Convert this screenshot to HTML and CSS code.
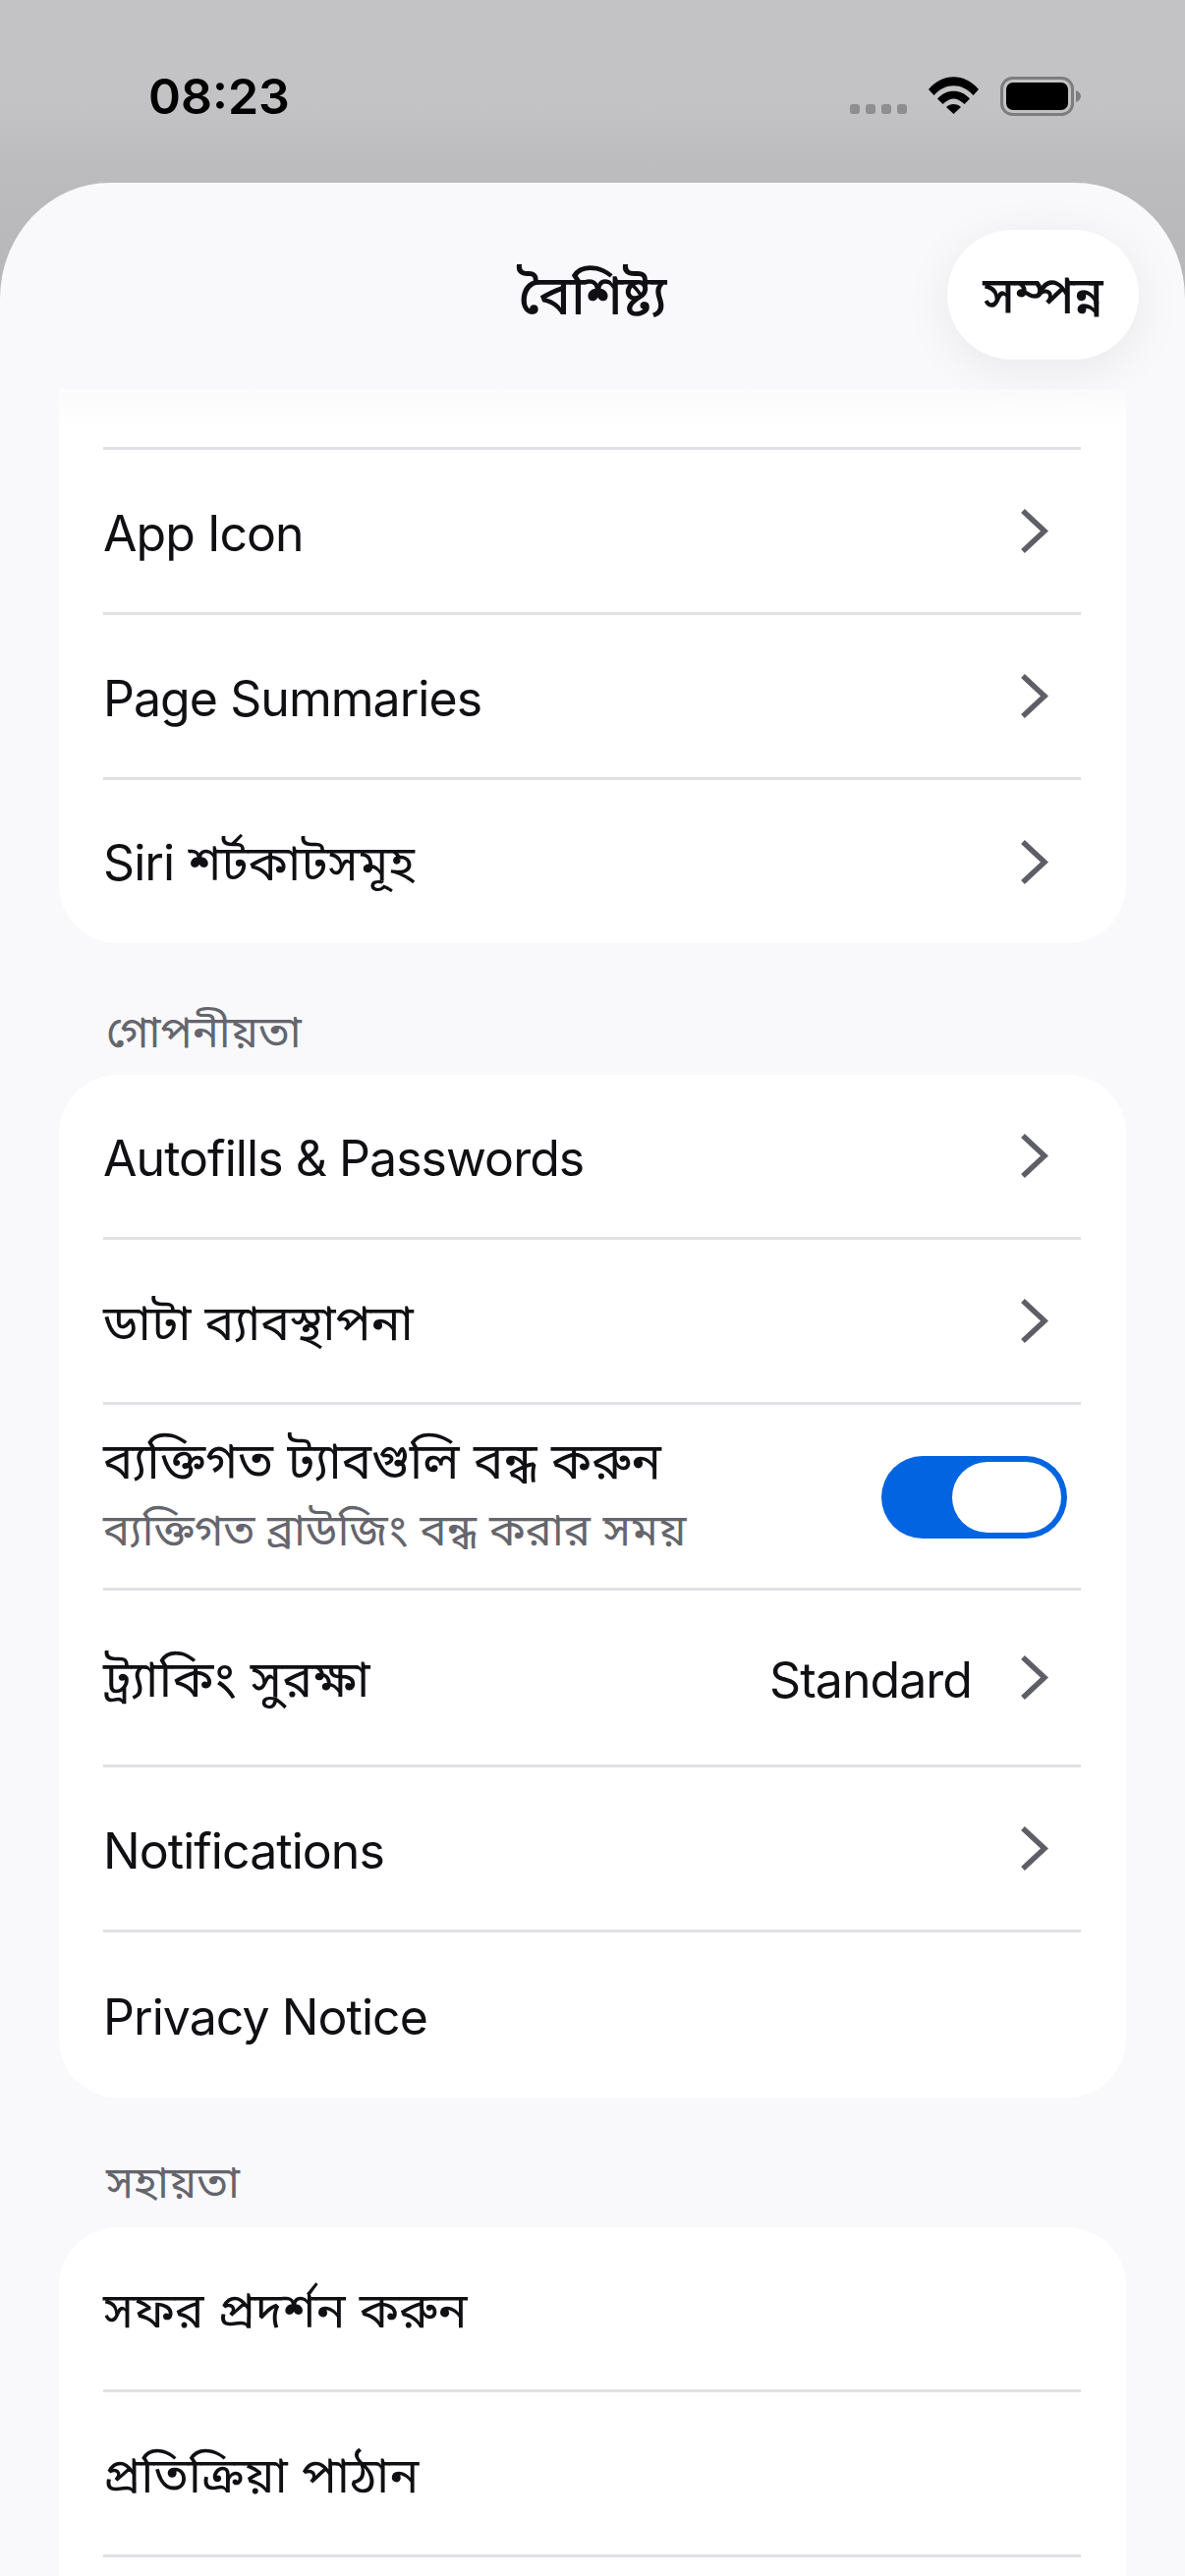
FILE: index.html
```html
<!DOCTYPE html>
<html lang="bn">
<head>
  <meta charset="UTF-8">
  <title>বৈশিষ্ট্য</title>
  <link rel="stylesheet" href="styles.css">
</head>
<body>
  <div class="status-bar">
    <span class="clock">08:23</span>
    <div class="status-icons">
      <div class="signal"><i></i><i></i><i></i><i></i></div>
      <svg class="wifi" width="51" height="38" viewBox="0 0 51 38">
        <path d="M0 13 C14 -4 37 -4 51 13 L45.500 19 C34 6 17 6 5.500 19 Z"/>
        <path d="M9 22.500 C18 12 33 12 42 22.500 L36.500 28 C29 20.500 22 20.500 14.500 28 Z"/>
        <path d="M18 31 C22 27 29 27 33 31 L25.500 38 Z"/>
      </svg>
      <svg class="battery" width="82" height="40" viewBox="0 0 82 40">
        <rect x="1.500" y="1.500" width="72" height="37" rx="11" fill="none" stroke="#7d7d7f" stroke-width="3"/>
        <rect x="6" y="6" width="63" height="28" rx="7"/>
        <path d="M77 14 C80 15 82 17.500 82 20 C82 22.500 80 25 77 26 Z" fill="#7d7d7f"/>
      </svg>
    </div>
  </div>

  <div class="sheet">
    <header class="sheet-header">
      <h1>বৈশিষ্ট্য</h1>
      <button class="done-btn">সম্পন্ন</button>
    </header>

    <div class="sheet-body">
      <section class="card card-cut">
        <div class="row row-stub"></div>
        <div class="row"><span class="latin">App Icon</span><svg class="chevron" viewBox="0 0 29 47"><path d="M3 3 L25 23.500 L3 44"/></svg></div>
        <div class="row"><span class="latin">Page Summaries</span><svg class="chevron" viewBox="0 0 29 47"><path d="M3 3 L25 23.500 L3 44"/></svg></div>
        <div class="row"><span class="bn"><span class="latin">Siri</span> শর্টকাটসমূহ</span><svg class="chevron" viewBox="0 0 29 47"><path d="M3 3 L25 23.500 L3 44"/></svg></div>
      </section>

      <h2 class="section-label">গোপনীয়তা</h2>
      <section class="card">
        <div class="row"><span class="latin">Autofills &amp; Passwords</span><svg class="chevron" viewBox="0 0 29 47"><path d="M3 3 L25 23.500 L3 44"/></svg></div>
        <div class="row"><span class="bn">ডাটা ব্যাবস্থাপনা</span><svg class="chevron" viewBox="0 0 29 47"><path d="M3 3 L25 23.500 L3 44"/></svg></div>
        <div class="row row-toggle">
          <div class="row-text">
            <span class="wide">ব্যক্তিগত ট্যাবগুলি বন্ধ করুন</span>
            <small>ব্যক্তিগত ব্রাউজিং বন্ধ করার সময়</small>
          </div>
          <div class="toggle"><div class="knob"></div></div>
        </div>
        <div class="row row-tall">
          <span class="bn wider">ট্র্যাকিং সুরক্ষা</span>
          <span class="row-value latin">Standard</span>
          <svg class="chevron" viewBox="0 0 29 47"><path d="M3 3 L25 23.500 L3 44"/></svg>
        </div>
        <div class="row"><span class="latin">Notifications</span><svg class="chevron" viewBox="0 0 29 47"><path d="M3 3 L25 23.500 L3 44"/></svg></div>
        <div class="row row-end"><span class="latin">Privacy Notice</span></div>
      </section>

      <h2 class="section-label section-label-short">সহায়তা</h2>
      <section class="card card-open">
        <div class="row"><span class="bn">সফর প্রদর্শন করুন</span></div>
        <div class="row"><span class="bn">প্রতিক্রিয়া পাঠান</span></div>
        <div class="row row-peek"></div>
      </section>
    </div>
  </div>
</body>
</html>
```

FILE: styles.css
```css
* {
  box-sizing: border-box;
}
html, body {
  margin: 0;
  height: 2622px;
  overflow: hidden;
}
body {
  width: 1206px;
  font-family: Inter, "Noto Sans Bengali", "Noto Sans", sans-serif;
  color: #101014;
  background: linear-gradient(#c3c3c5, #c3c3c5 100px, #bbbbbd 186px, #b4b4b6 400px);
  display: flex;
  flex-direction: column;
}
.status-bar {
  height: 186px;
  flex: none;
  display: flex;
  justify-content: space-between;
  padding: 68px 106px 0 151px;
}
.clock {
  font-size: 50px;
  line-height: 60px;
  font-weight: 600;
  color: #000;
}
.status-icons {
  display: flex;
  align-items: flex-start;
  gap: 22px;
  padding-top: 10px;
}
.signal {
  display: flex;
  gap: 6px;
  padding-top: 28px;
}
.signal i {
  width: 10px;
  height: 10px;
  border-radius: 3px;
  background: #8e8e90;
}
.sheet {
  flex: 1;
  min-height: 0;
  background: #f9f9fb;
  border-radius: 112px 112px 0 0 / 118px 118px 0 0;
  display: flex;
  flex-direction: column;
}
.sheet-header {
  height: 210px;
  flex: none;
  position: relative;
  display: flex;
  justify-content: center;
  align-items: center;
  padding-top: 27px;
  z-index: 1;
}
.sheet-header::after {
  content: "";
  position: absolute;
  left: 60px;
  right: 60px;
  top: 210px;
  height: 40px;
  background: linear-gradient(rgba(249,249,251,0.7), rgba(249,249,251,0));
}
.sheet-header h1 {
  margin: 0;
  font-size: 55px;
  font-weight: 500;
}
.done-btn {
  position: absolute;
  top: 48px;
  right: 47px;
  width: 195px;
  height: 132px;
  padding: 8px 0 0;
  border: none;
  border-radius: 66px;
  background: #fff;
  color: #101014;
  font: 500 52px Inter, "Noto Sans Bengali", "Noto Sans", sans-serif;
  box-shadow: 0 10px 50px rgba(0,0,0,0.07);
}
.sheet-body {
  padding: 0 60px;
}
.card {
  background: #fff;
  border-radius: 60px;
  padding: 0 46px 0 45px;
}
.card-cut {
  border-radius: 0 0 60px 60px;
}
.card-open {
  border-radius: 60px 60px 0 0;
}
.row {
  height: 168px;
  padding-top: 4px;
  display: flex;
  align-items: center;
  justify-content: space-between;
  border-bottom: 3px solid #e0e0e6;
  font-size: 50px;
}
.row:last-child {
  border-bottom: none;
  height: 166px;
}
.row.row-end {
  height: 168px;
}
.row.row-peek {
  height: 19px;
}
.row-stub {
  height: 62px;
}
.row-toggle {
  height: 189px;
  padding-top: 2px;
}
.row-tall {
  height: 180px;
}
.row-text {
  display: flex;
  flex-direction: column;
  gap: 3px;
}
.row-text small {
  font-size: 45.500px;
  color: #65656d;
}
.bn {
  padding-top: 6px;
}
.latin {
  letter-spacing: -0.95px;
}
.wide {
  font-size: 51px;
}
.wider {
  font-size: 52px;
}
.row-value {
  margin-left: auto;
  margin-right: 49px;
}
.chevron {
  width: 29px;
  height: 47px;
  margin: -4px 33px 0 0;
  fill: none;
  stroke: #5e5e66;
  stroke-width: 5.500;
}
.toggle {
  width: 189px;
  height: 84px;
  margin-right: 14px;
  border-radius: 42px;
  background: #0264e0;
  display: flex;
  justify-content: flex-end;
  align-items: center;
  padding-right: 6px;
}
.knob {
  width: 111px;
  height: 72px;
  border-radius: 36px;
  background: #fff;
}
.section-label {
  margin: 0;
  height: 134px;
  padding: 62px 0 0 48px;
  font-size: 45px;
  line-height: 56px;
  font-weight: 400;
  color: #65656d;
}
.section-label-short {
  height: 132px;
  padding-top: 58px;
}
```
